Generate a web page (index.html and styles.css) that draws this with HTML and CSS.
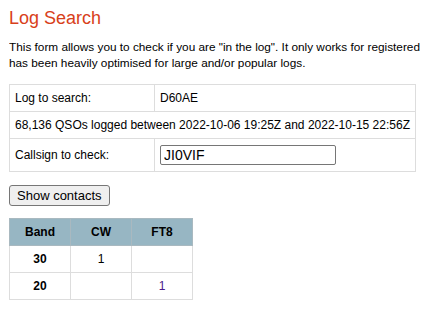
FILE: index.html
```html
<!DOCTYPE html>
<html lang="en">
<head>
    <meta charset="UTF-8">
    <meta name="viewport" content="width=device-width, initial-scale=1.0">
    <title>Log Search</title>
    <link rel="stylesheet" href="styles.css">
</head>
<body>
    <div class="page">
        <h1 class="title">Log Search</h1>
        <p class="intro">This form allows you to check if you are "in the log". It only works for registered<br>has been heavily optimised for large and/or popular logs.</p>

        <form class="search-form" onsubmit="return false;">
            <table class="form-table">
                <tr>
                    <td class="label">Log to search:</td>
                    <td>D60AE</td>
                </tr>
                <tr>
                    <td colspan="2">68,136 QSOs logged between 2022-10-06 19:25Z and 2022-10-15 22:56Z</td>
                </tr>
                <tr>
                    <td class="label">Callsign to check:</td>
                    <td><input type="text" class="call-input" value="JI0VIF"></td>
                </tr>
            </table>
            <button class="show-btn">Show contacts</button>
        </form>

        <table class="results">
            <thead>
                <tr>
                    <th>Band</th>
                    <th>CW</th>
                    <th>FT8</th>
                </tr>
            </thead>
            <tbody>
                <tr>
                    <td class="band">30</td>
                    <td>1</td>
                    <td></td>
                </tr>
                <tr>
                    <td class="band">20</td>
                    <td></td>
                    <td><a href="#">1</a></td>
                </tr>
            </tbody>
        </table>
    </div>
</body>
</html>
```

FILE: styles.css
```css
body{
    margin: 8px 9px;
    font-family: "Liberation Sans", Arial, sans-serif;
    font-size: 12px;
    color: #000;
    background: #fff;
}
.title{
    margin: 0 0 10px 0;
    font-size: 18px;
    font-weight: normal;
    color: #d8401a;
}
.intro{
    margin: 0 0 13px 0;
    font-size: 11.8px;
    line-height: 16px;
    white-space: nowrap;
}
.form-table{
    border-collapse: collapse;
    margin-bottom: 13px;
}
.form-table td{
    border: 1px solid #ddd;
    padding: 6px 5px;
    line-height: 14px;
}
.form-table td.label{
    width: 134px;
}
.call-input{
    display: block;
    box-sizing: border-box;
    width: 176px;
    height: 20px;
    padding: 0 3px;
    border: 1px solid #767676;
    border-radius: 2px;
    font-family: "Liberation Sans", Arial, sans-serif;
    font-size: 14px;
    color: #000;
}
.show-btn{
    display: block;
    box-sizing: border-box;
    height: 21px;
    padding: 0 7px;
    font-family: "Liberation Sans", Arial, sans-serif;
    font-size: 13px;
    color: #000;
    background: #efefef;
    border: 1px solid #767676;
    border-radius: 3px;
    margin-bottom: 12px;
}
.results{
    border-collapse: collapse;
}
.results th, .results td{
    width: 50px;
    padding: 6px 5px;
    line-height: 14px;
    text-align: center;
}
.results th{
    background: #97b6c3;
    border: 1px solid #a9b9c0;
}
.results td{
    border: 1px solid #ddd;
}
.results td.band{
    font-weight: bold;
}
.results a{
    color: #4b1a8b;
    text-decoration: none;
}
```
